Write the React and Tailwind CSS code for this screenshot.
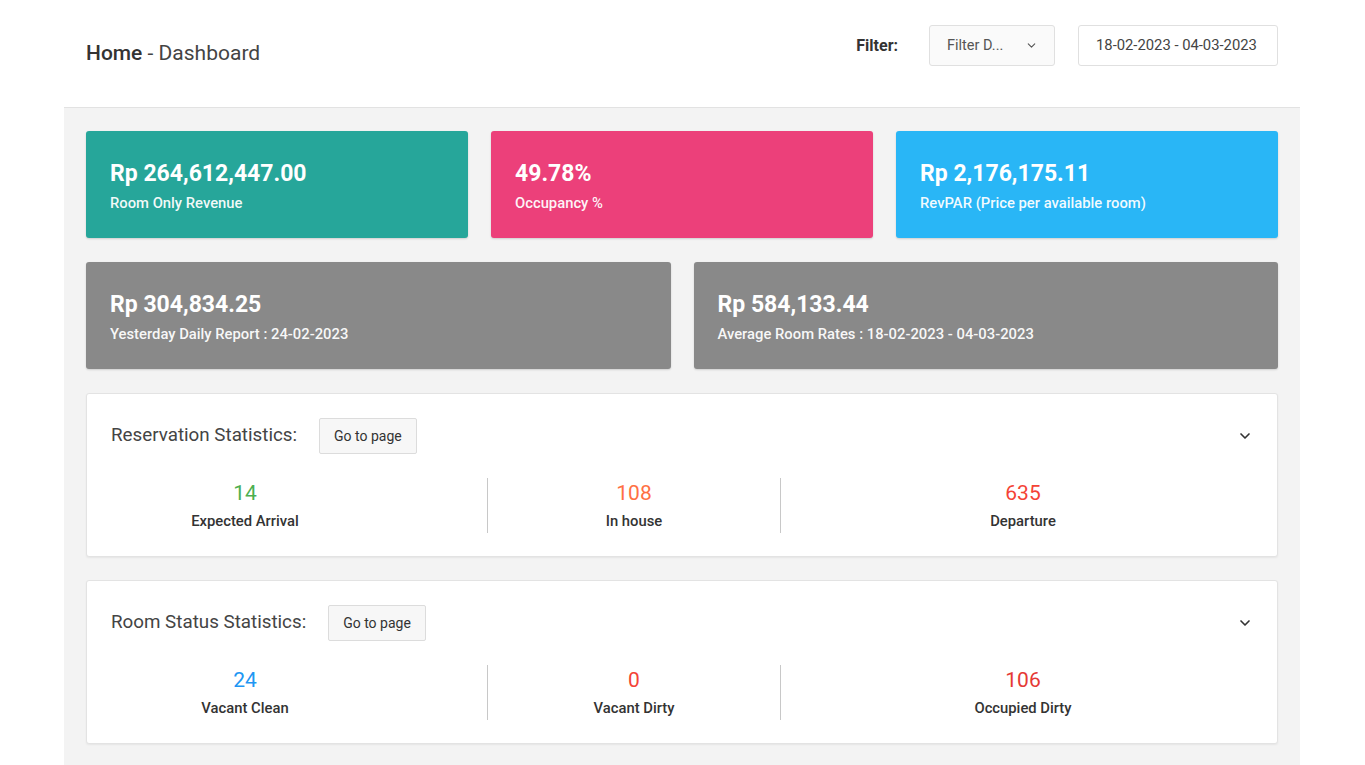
import React from "react";
import { ChevronDown } from "lucide-react";

function StatCard({ color, value, label }) {
  return (
    <div className={`${color} rounded-[3px] px-6 pt-[27px] pb-[25px] text-white shadow-[0_1px_2px_rgba(0,0,0,0.15)]`}>
      <div className="text-[23px] font-bold leading-[32px]">{value}</div>
      <div className="mt-[3px] text-[14.8px] font-medium leading-[20px] text-white/95">{label}</div>
    </div>
  );
}

function Stat({ value, label, color, className }) {
  return (
    <div className={`shrink-0 text-center ${className}`}>
      <div className={`text-[21px] leading-[28px] mt-[1px] ${color}`}>{value}</div>
      <div className="mt-[4px] text-[14.8px] font-medium leading-[20px] text-[#333]">{label}</div>
    </div>
  );
}

function Panel({ title, stats }) {
  return (
    <div className="rounded-[3px] border border-[#e3e3e3] bg-white px-6 pt-6 pb-[23px] shadow-[0_1px_2px_rgba(0,0,0,0.06)]">
      <div className="flex h-9 items-center">
        <span className="pb-[3px] text-[18.8px] leading-[24px] text-[#444]">{title}</span>
        <button className="ml-[22px] h-9 rounded-[2px] border border-[#dcdcdc] bg-[#f7f7f7] px-[14px] text-[14px] text-[#333]">
          Go to page
        </button>
        <ChevronDown className="ml-auto text-[#333]" size={16} strokeWidth={2.5} />
      </div>
      <div className="mt-6 flex h-[55px]">
        <Stat className="w-[268px]" {...stats[0]} />
        <div className="w-[108px] shrink-0" />
        <div className="h-full w-px shrink-0 bg-[#c8c8c8]" />
        <Stat className="w-[292px]" {...stats[1]} />
        <div className="h-full w-px shrink-0 bg-[#c8c8c8]" />
        <Stat className="w-[484px]" {...stats[2]} />
      </div>
    </div>
  );
}

export default function App() {
  return (
    <div className="min-h-[765px] bg-white font-['Roboto',sans-serif]">
      <div className="mx-[64px] w-[1236px]">
        <div className="flex h-[108px] justify-between border-b border-[#e2e2e2] px-[22px]">
          <div className="mt-[39px] text-[21px] leading-[28px] text-[#333]">
            <span className="font-medium">Home</span>
            <span className="text-[#444]"> - Dashboard</span>
          </div>
          <div className="mt-[25px] flex h-[41px] items-center">
            <span className="text-[16px] font-bold text-[#333]">Filter:</span>
            <div className="ml-[31px] flex h-[41px] w-[126px] items-center justify-between rounded-[3px] border border-[#e0e0e0] bg-[#fafafa] pl-[17px] pr-[16px] text-[14.5px] text-[#555]">
              <span>Filter D...</span>
              <ChevronDown size={13} strokeWidth={2} className="text-[#555]" />
            </div>
            <div className="ml-[23px] flex h-[41px] w-[200px] items-center rounded-[3px] border border-[#e0e0e0] bg-white pl-[17px] text-[14.8px] text-[#444]">
              18-02-2023 - 04-03-2023
            </div>
          </div>
        </div>
        <div className="min-h-[657px] bg-[#f3f3f3] px-[22px] pt-[23px] pb-6">
          <div className="grid grid-cols-3 gap-[23px]">
            <StatCard color="bg-[#26a69a]" value="Rp 264,612,447.00" label="Room Only Revenue" />
            <StatCard color="bg-[#ec407a]" value="49.78%" label="Occupancy %" />
            <StatCard color="bg-[#29b6f6]" value="Rp 2,176,175.11" label="RevPAR (Price per available room)" />
          </div>
          <div className="mt-6 grid grid-cols-2 gap-[23px]">
            <StatCard color="bg-[#898989]" value="Rp 304,834.25" label="Yesterday Daily Report : 24-02-2023" />
            <StatCard color="bg-[#898989]" value="Rp 584,133.44" label="Average Room Rates : 18-02-2023 - 04-03-2023" />
          </div>
          <div className="mt-6">
            <Panel
              title="Reservation Statistics:"
              stats={[
                { value: "14", label: "Expected Arrival", color: "text-[#4caf50]" },
                { value: "108", label: "In house", color: "text-[#ff7043]" },
                { value: "635", label: "Departure", color: "text-[#f44336]" },
              ]}
            />
          </div>
          <div className="mt-[23px]">
            <Panel
              title="Room Status Statistics:"
              stats={[
                { value: "24", label: "Vacant Clean", color: "text-[#2196f3]" },
                { value: "0", label: "Vacant Dirty", color: "text-[#f44336]" },
                { value: "106", label: "Occupied Dirty", color: "text-[#e53935]" },
              ]}
            />
          </div>
        </div>
      </div>
    </div>
  );
}
